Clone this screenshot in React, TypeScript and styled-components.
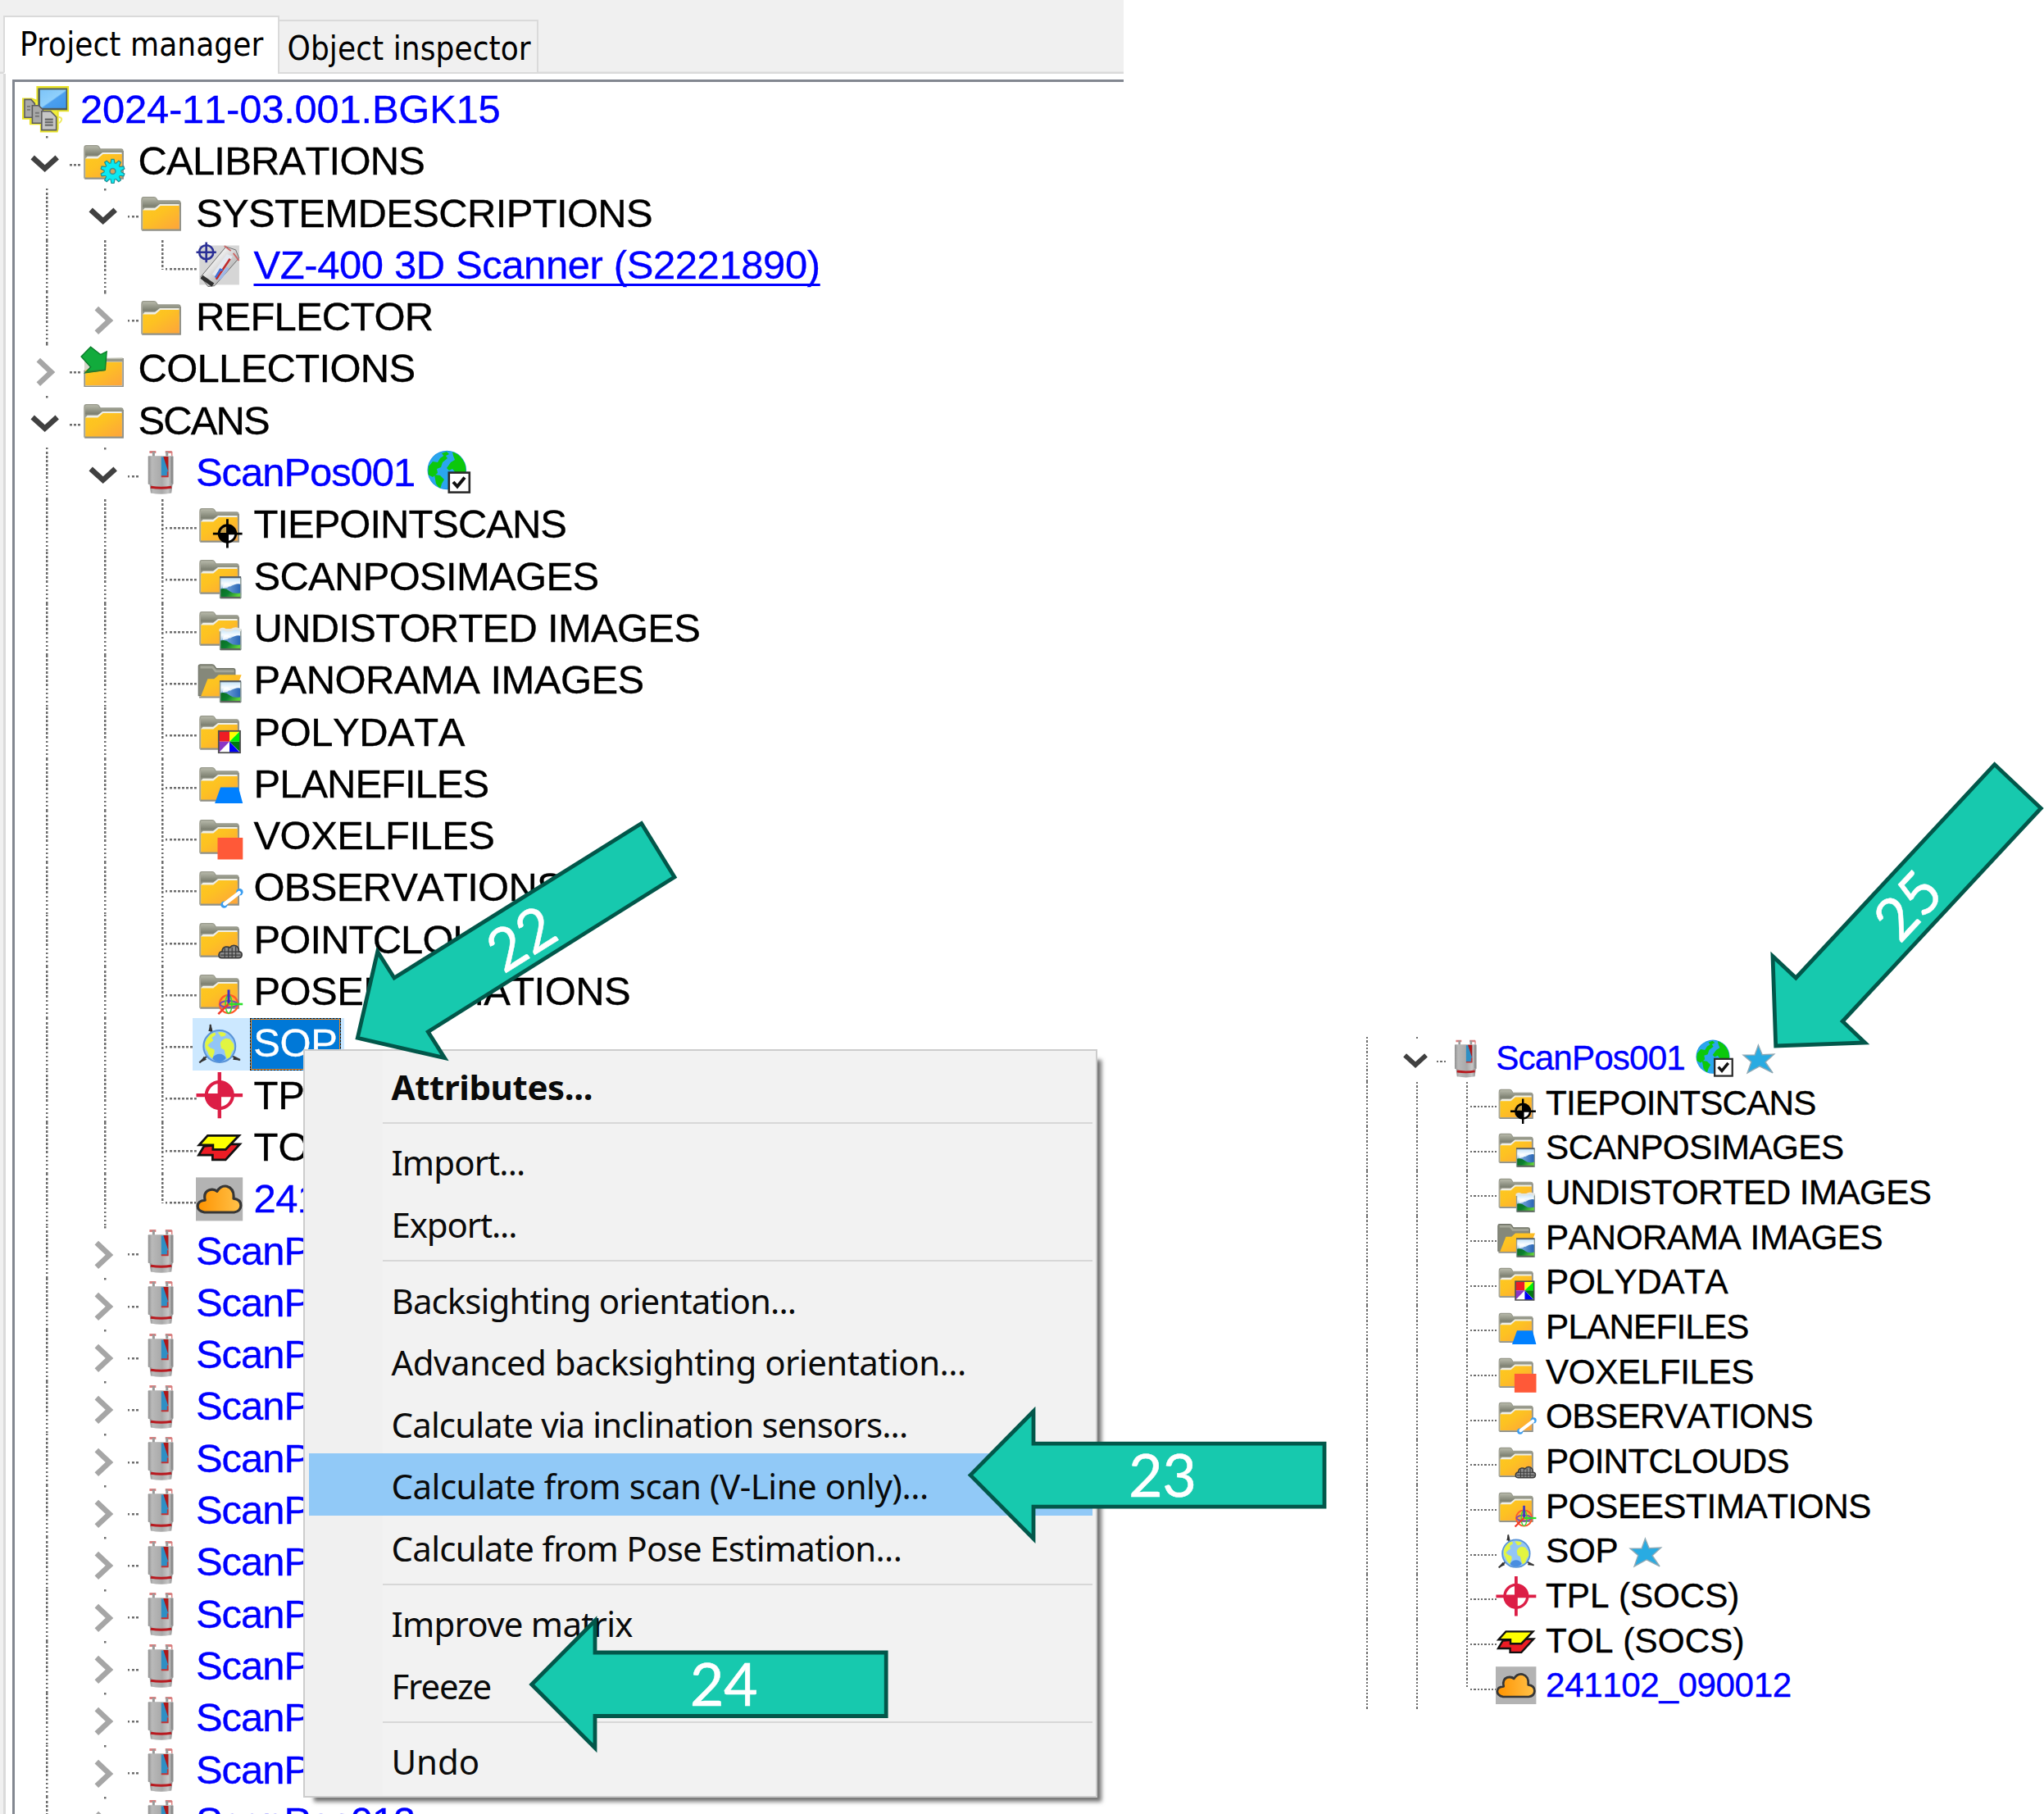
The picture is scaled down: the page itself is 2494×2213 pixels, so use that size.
import React from "react";
import styled, { createGlobalStyle, css } from "styled-components";

const GlobalStyle = createGlobalStyle`
  * { box-sizing: border-box; }
  html, body { margin: 0; padding: 0; background: #ffffff; }
`;

/* ---------- palette ---------- */
const INK = "#000000";
const LINK = "#0000ff";
const TEAL = "#17c9ae";
const TEAL_DARK = "#02574a";
const DOT = "#6e6e6e";

/* Tree measures are stated for a 48px font and turned into em. */
const em = (px: number) => `${px / 48}em`;

/* ---------- page ---------- */
const Page = styled.main`
  position: relative;
  display: flex;
  width: 2494px;
  height: 2213px;
  overflow: hidden;
  background: #ffffff;
  color: ${INK};
`;

const ManagerPane = styled.section`
  display: flex;
  flex-direction: column;
  width: 1371px;
  height: 100%;
  flex: none;
  background: #f0f0f0;
`;

const TabBar = styled.div`
  display: flex;
  align-items: flex-end;
  height: 90px;
  padding-left: 4px;
  flex: none;
  box-shadow: inset 0 -2.5px 0 #dadada;
`;

const Tab = styled.div<{ $active?: boolean }>`
  border: 2px solid #dadada;
  font-family: "DejaVu Sans Condensed", "DejaVu Sans", sans-serif;
  font-stretch: condensed;
  font-size: 40px;
  white-space: nowrap;
  color: #000;
  ${(p) =>
    p.$active
      ? css`
          width: 337px;
          height: 71px;
          padding-left: 18px;
          line-height: 66px;
          letter-spacing: 0.08px;
          background: #ffffff;
          border-bottom-color: #ffffff;
        `
      : css`
          width: 318px;
          height: 66px;
          margin-left: -2px;
          padding-left: 9.5px;
          line-height: 66px;
          letter-spacing: 0.08px;
          background: #f0f0f0;
        `}
`;

const TabBody = styled.div`
  flex: 1;
  min-height: 0;
  margin-left: 4px;
  padding: 7px 0 0 7.5px;
  border-left: 3px solid #dadada;
  background: #ffffff;
`;

const TreeFrame = styled.div`
  height: 100%;
  padding: 3px 0 0 10.5px;
  border-top: 3px solid #828790;
  border-left: 3px solid #828790;
  background: #ffffff;
  overflow: hidden;
`;

const ResultPane = styled.section`
  flex: 1;
  padding: 1265px 0 0 272px;
  overflow: hidden;
`;

/* ---------- tree ---------- */
const TreeList = styled.div<{ $size: number }>`
  font-family: "Liberation Sans", Arial, sans-serif;
  font-size: ${(p) => p.$size}px;
  font-kerning: none;
`;

const TreeRow = styled.div`
  display: flex;
  height: ${em(63.3)};
`;

type GuideKind = "line" | "tee" | "end" | "open" | "closed";

const vertical = css`
  background-image: repeating-linear-gradient(
    to bottom,
    ${DOT} 0 ${em(2.5)},
    transparent ${em(2.5)} ${em(5.064)}
  );
  background-repeat: no-repeat;
  background-position: ${em(28.2)} 0;
`;

const branch = (fullHeight: string) => css`
  background-image: repeating-linear-gradient(
      to bottom,
      ${DOT} 0 ${em(2.5)},
      transparent ${em(2.5)} ${em(5.064)}
    ),
    repeating-linear-gradient(
      to right,
      ${DOT} 0 ${em(2.5)},
      transparent ${em(2.5)} ${em(5.04)}
    );
  background-repeat: no-repeat;
  background-position: ${em(28.2)} 0, ${em(33.3)} ${em(33.8)};
  background-size: ${em(2.5)} ${fullHeight}, ${em(37.8)} ${em(2.5)};
`;

const toggle = css`
  background-image: linear-gradient(${DOT}, ${DOT}),
    repeating-linear-gradient(
      to right,
      ${DOT} 0 ${em(2.5)},
      transparent ${em(2.5)} ${em(5.04)}
    );
  background-repeat: no-repeat;
  background-position: ${em(28.2)} 0, ${em(57.2)} ${em(33.8)};
  background-size: ${em(2.5)} ${em(2.5)}, ${em(13)} ${em(2.5)};
`;

const GuideCell = styled.span<{ $kind: GuideKind }>`
  display: block;
  flex: none;
  width: ${em(70.5)};
  height: ${em(63.3)};
  ${(p) => p.$kind === "line" && css`${vertical} background-size: ${em(2.5)} 100%;`}
  ${(p) => p.$kind === "tee" && branch("100%")}
  ${(p) => p.$kind === "end" && branch(em(36.3))}
  ${(p) => (p.$kind === "open" || p.$kind === "closed") && toggle}
`;

const Chevron = styled.svg`
  display: block;
  width: ${em(70.5)};
  height: ${em(63.3)};
  fill: none;
`;

const IconCell = styled.span`
  display: block;
  flex: none;
  width: ${em(65.7)};
  padding-top: ${em(2.4)};
`;

const IconSvg = styled.svg`
  display: block;
  width: ${em(57.2)};
  height: ${em(57.2)};
  margin-left: ${em(-0.6)};
  overflow: visible;
`;

const Selection = styled.span`
  display: flex;
  margin-left: ${em(-5)};
  padding: 0 ${em(4.4)} 0 ${em(5)};
  background: #cce8ff;
`;

const Label = styled.span<{ $link?: boolean; $selected?: boolean }>`
  display: block;
  height: ${em(63.3)};
  padding: 0 ${em(4.3)};
  line-height: ${em(61)};
  white-space: pre;
  color: ${(p) => (p.$selected ? "#ffffff" : p.$link ? LINK : INK)};
  -webkit-text-stroke: 0.35px currentColor;
  ${(p) =>
    p.$selected &&
    css`
      background: #0078d7;
      border: 2.5px dotted #1a1208;
      outline: 1px solid #f08a24;
      outline-offset: -2px;
      padding: 0 2px;
      line-height: 57px;
    `}
`;

/* Tall, slightly tightened letters inside the fixed row height. */
const LabelText = styled.span<{ $underline?: boolean; $track: number }>`
  font-size: 1.02em;
  line-height: 1;
  letter-spacing: ${(p) => em(p.$track - 0.62)};
  ${(p) =>
    p.$underline &&
    css`
      text-decoration: underline;
      text-decoration-thickness: 2.6px;
      text-underline-offset: 6px;
      text-decoration-skip-ink: none;
    `}
`;

const Badge = styled.svg<{ $w: number; $h: number; $left: number; $top: number }>`
  display: block;
  flex: none;
  width: ${(p) => em(p.$w)};
  height: ${(p) => em(p.$h)};
  margin: ${(p) => em(p.$top)} 0 0 ${(p) => em(p.$left)};
  overflow: visible;
`;

/* ---------- icons ---------- */
type IconName =
  | "project" | "calib" | "folder" | "device" | "collections" | "scanner" | "tiepoint"
  | "images" | "undistorted" | "panorama" | "poly" | "plane" | "voxel" | "observ"
  | "cloudfolder" | "pose" | "sop" | "tpl" | "tol" | "cloud";

const IconDefs = () => (
  <svg width="0" height="0" aria-hidden="true" display="block">
    <defs>
      <linearGradient id="gBack" x1="0" y1="0" x2="0" y2="1">
        <stop offset="0" stopColor="#b9bbac" />
        <stop offset="0.28" stopColor="#7e8172" />
        <stop offset="0.5" stopColor="#c9cabf" />
      </linearGradient>
      <linearGradient id="gYellow" x1="0" y1="0" x2="1" y2="1">
        <stop offset="0" stopColor="#fec91e" />
        <stop offset="0.4" stopColor="#fdc222" />
        <stop offset="1" stopColor="#fda43c" />
      </linearGradient>
      <linearGradient id="gScreen" x1="0" y1="0" x2="1" y2="1">
        <stop offset="0" stopColor="#7cc3f8" />
        <stop offset="0.5" stopColor="#8fd0fb" />
        <stop offset="0.55" stopColor="#4b9fee" />
        <stop offset="1" stopColor="#3f97ea" />
      </linearGradient>
      <linearGradient id="gSky" x1="0" y1="0" x2="0" y2="1">
        <stop offset="0" stopColor="#bfe0f8" />
        <stop offset="0.3" stopColor="#f6fbff" />
        <stop offset="0.6" stopColor="#9cc8ec" />
      </linearGradient>
      <linearGradient id="gPeak" x1="0" y1="0" x2="1" y2="0">
        <stop offset="0" stopColor="#8dbbe6" />
        <stop offset="1" stopColor="#2461b4" />
      </linearGradient>
      <linearGradient id="gHill" x1="0" y1="0" x2="1" y2="0.4">
        <stop offset="0" stopColor="#0a6a20" />
        <stop offset="0.5" stopColor="#0b8030" />
        <stop offset="1" stopColor="#5fd23a" />
      </linearGradient>
      <linearGradient id="gMetal" x1="0" y1="0" x2="1" y2="0">
        <stop offset="0" stopColor="#8f8f8f" />
        <stop offset="0.15" stopColor="#b9b9b9" />
        <stop offset="0.55" stopColor="#a9a9a9" />
        <stop offset="0.8" stopColor="#c6c6c6" />
        <stop offset="1" stopColor="#8c8c8c" />
      </linearGradient>
      <linearGradient id="gTilt" x1="0" y1="0" x2="1" y2="1">
        <stop offset="0" stopColor="#8a8a8a" />
        <stop offset="0.35" stopColor="#eeeeee" />
        <stop offset="0.7" stopColor="#b5b5b5" />
        <stop offset="1" stopColor="#5d5d5d" />
      </linearGradient>
      <linearGradient id="gCloud" x1="0" y1="0" x2="1" y2="0">
        <stop offset="0" stopColor="#ff9300" />
        <stop offset="1" stopColor="#ffc24a" />
      </linearGradient>
      <clipPath id="cGlobe"><circle cx="24.3" cy="24.5" r="23.2" /></clipPath>
    </defs>
  </svg>
);

const Folder = () => (
  <g>
    <path d="M5 48V11q0-2.400 2.400-2.400H20q2 0 3 1.800l1.600 2.600H50q2.300 0 2.300 2.300V48z" fill="url(#gBack)" stroke="#96988a" strokeWidth="1.200" />
    <path d="M6.500 24.500l2.200-2.500h12.500l6-5H51v4H29l-6 5.500H7z" fill="#efefe6" />
    <path d="M6.300 47.800V24.800h15.200l6.400-5.600H51.200V47.800z" fill="url(#gYellow)" />
    <path d="M5.200 49.200h47.300V15" fill="none" stroke="#8f8f86" strokeWidth="1.600" />
    <path d="M5.200 12v37" stroke="#a8a89c" strokeWidth="1.600" />
  </g>
);

const OpenFolder = () => (
  <g>
    <path d="M3.300 47V11q0-2.200 2.200-2.200H20q2 0 3 1.800l2 3H46q2.200 0 2.200 2.200V22L12 47z" fill="#85887a" stroke="#6f7266" strokeWidth="1.200" />
    <path d="M5.500 12h15l4 5H47" fill="none" stroke="#a5a799" strokeWidth="3" />
    <path d="M6 48l8.500-21.500h8l5.500-5H56L46 48z" fill="url(#gYellow)" />
    <path d="M4 48.800h32" stroke="#8f8f86" strokeWidth="2" />
  </g>
);

const Picture = ({ torn }: { torn?: boolean }) => (
  <g>
    <rect x="29.500" y="29.200" width="26" height="26" fill="url(#gSky)" />
    <path d="M30 44q6-6 12-3 8-5 13.500-3V51H30z" fill="url(#gPeak)" />
    <path d="M34 38q5-3 9 1l-4 3-6 1z" fill="#ffffff" opacity="0.85" />
    <path d="M29.500 44q7-2 12 2.500 5 4 14 2V55.200h-26z" fill="url(#gHill)" />
    <path d="M30 54.500h25.500" stroke="#5d655d" strokeWidth="2.400" />
    <path d="M29.800 30v25M55.200 30v25" stroke="#8d9a96" strokeWidth="1.500" />
    {torn ? (
      <path d="M30 32.500v-2q3-2 6 0 4 1.500 8 0 4-2.500 8-1l3.500 2" fill="none" stroke="#e6e6e0" strokeWidth="3" />
    ) : (
      <path d="M29.200 29.400h26.300" stroke="#555d66" strokeWidth="2.200" />
    )}
  </g>
);

const gearTeeth = Array.from({ length: 10 }, (_, i) => i * 36);

const iconArt: Record<IconName, React.ReactNode> = {
  project: (
    <g>
      <path d="M18.500 1H56.500V30.500H44V52.500L43 56H23V46.500H10V40H1V15.500H12L18.500 18z" fill="#f2ee3a" stroke="#e9e32a" strokeWidth="2" />
      <rect x="19.500" y="2.500" width="36" height="27" fill="#4c5a5c" />
      <rect x="22" y="4.500" width="32" height="22.500" fill="url(#gScreen)" />
      <g stroke="#5c5c5c" strokeWidth="1.600" fill="#a9a9a9">
        <path d="M3 16.500h8l4.500 5V38.500H3z" />
        <path d="M12.500 24h8l5 5V45.500h-13z" />
        <path d="M24 31h11l7 7V54H24z" fill="#c6c6c6" />
      </g>
      <path d="M28 41h10M28 44.500h10M28 48h10" stroke="#6a6a6a" strokeWidth="2.400" />
      <path d="M16 33h5M16 37h5M6 25h4M6 29h4" stroke="#777" strokeWidth="1.800" />
      <path d="M45 38q5 1 3 4.500t-3 2" fill="none" stroke="#eeea60" strokeWidth="2" />
    </g>
  ),
  folder: <Folder />,
  calib: (
    <g>
      <Folder />
      <g fill="#0ceaf2" stroke="#1b8c90" strokeWidth="1.200">
        {gearTeeth.map((a) => (
          <path key={a} d="M37 31.500l1.200-6h3.200l1.200 6z" transform={`rotate(${a} 39.800 40.200)`} />
        ))}
      </g>
      <circle cx="39.800" cy="40.200" r="10" fill="#0ceaf2" />
      <circle cx="39.800" cy="40.200" r="3.400" fill="#d9a25a" stroke="#3a8f90" strokeWidth="1.600" />
    </g>
  ),
  device: (
    <g>
      <rect x="4.300" y="4.500" width="49" height="48.300" fill="#d6d6d6" />
      <path d="M6 43L37 6l12 4 4 10-30 34-8 1z" fill="url(#gTilt)" stroke="#6c6c6c" strokeWidth="1" />
      <path d="M20 40L38 15l7 3-16 26z" fill="#e4e8f0" />
      <path d="M25 46L42 21" stroke="#c02a2a" strokeWidth="2.600" />
      <path d="M26 47l12-16 3 2-10 13z" fill="#9db8e8" />
      <path d="M24 44l6-10 3 1" stroke="#3f6fd8" strokeWidth="2.500" fill="none" />
      <path d="M35 5l8 6M46 14l7 9" stroke="#c66" strokeWidth="1.800" />
      <path d="M7 43l14 10" stroke="#303030" strokeWidth="5" />
      <g fill="none" stroke="#2a2f96" strokeWidth="2.600">
        <circle cx="12.800" cy="12.800" r="8.600" />
        <path d="M12.800 0.500V25.500M0.500 12.800H25" />
      </g>
    </g>
  ),
  collections: (
    <g>
      <path d="M5 48V15.500L52 14V48z" fill="#d5d6ca" />
      <path d="M30 17.500H52" stroke="#96988a" strokeWidth="3.600" />
      <path d="M6.300 48.500V30l20-10.200H51.200V48.500z" fill="url(#gYellow)" />
      <path d="M5.200 30V49.600h47.300V15" fill="none" stroke="#8f8f86" strokeWidth="1.600" />
      <path d="M1.100 13L12.700 1.200 24.800 10.600 32.400 7 30.600 29.600 6 33 12.700 26z" fill="#12ab3c" stroke="#0b7d2b" strokeWidth="1.400" />
      <path d="M6 32l24-2.500" stroke="#2f7a2f" strokeWidth="1.800" />
    </g>
  ),
  scanner: (
    <g>
      <path d="M14.500 3.500h8M34 3.500h8" stroke="#d98080" strokeWidth="3" />
      <path d="M19.500 3v6M36 3v6" stroke="#9a9a9a" strokeWidth="3" />
      <path d="M42 3v5" stroke="#d98080" strokeWidth="1.500" />
      <path d="M14.500 42h28.500l-1.500 12q-12.500 2.500-25.500 0z" fill="url(#gMetal)" />
      <rect x="12.800" y="8.400" width="31" height="34.800" rx="1" fill="url(#gMetal)" />
      <path d="M41.800 9v33" stroke="#8a8a8a" strokeWidth="1.500" />
      <path d="M29 9.500h8.500v24h-8.500z" fill="#2f8fc4" />
      <path d="M31.500 9h6.200v19z" fill="#b01818" />
      <path d="M29 33.500h8v-6" fill="none" stroke="#c23434" strokeWidth="1.800" />
      <path d="M16 46.600q13 2 25.500 0" fill="none" stroke="#b81a20" strokeWidth="3.200" />
    </g>
  ),
  tiepoint: (
    <g>
      <Folder />
      <path d="M38.700 21.500V57M21 39.300H57" stroke="#000" strokeWidth="2.800" />
      <circle cx="38.700" cy="39.300" r="10.800" fill="#000" stroke="#000" strokeWidth="2" />
      <path d="M40.300 40.600h7.200a9 9 0 0 1-7.200 7.400z" fill="#fff" />
      <path d="M37.300 38.200h-7.200a9 9 0 0 1 7.200-7.400z" fill="#c9a14a" />
    </g>
  ),
  images: (<g><Folder /><Picture /></g>),
  undistorted: (<g><Folder /><Picture torn /></g>),
  panorama: (<g><OpenFolder /><Picture /></g>),
  poly: (
    <g>
      <Folder />
      <rect x="28" y="27" width="26.400" height="26.600" fill="#fff" />
      <path d="M28 27h13.300v13H28z" fill="#ee1c24" />
      <path d="M41.300 27H54L41.300 40z" fill="#ffff00" />
      <path d="M54.400 27v13H41.300z" fill="#00f000" />
      <path d="M54.400 40v13L41.300 40z" fill="#007a10" />
      <path d="M54.400 53.600H41.300V40z" fill="#0000f5" />
      <path d="M28 40h13.300L28 53.600z" fill="#8a35c8" />
      <rect x="28" y="27" width="26.400" height="26.600" fill="none" stroke="#4e4e4e" strokeWidth="1.800" />
    </g>
  ),
  plane: (<g><Folder /><path d="M30.300 32.800h22L57.600 52.400H23.300z" fill="#0080ff" /></g>),
  voxel: (<g><Folder /><rect x="26.700" y="30.200" width="31" height="26.700" fill="#ff5938" /></g>),
  observ: (
    <g>
      <Folder />
      <circle cx="34.700" cy="49" r="4.200" fill="#3a9df0" />
      <circle cx="53.800" cy="33.500" r="4.200" fill="#3a9df0" />
      <path d="M35.500 48L53 34.500" stroke="#ffffff" strokeWidth="4.600" strokeLinecap="round" />
    </g>
  ),
  cloudfolder: (
    <g>
      <Folder />
      <path d="M31.500 51q-3.500 0-3.200-4 .4-3.500 4-3.800 0-5 4.400-5.800 3.400-.4 5 1 3-4 7.200-2.400 4.600 2 3.800 7.200 4 .4 3.800 4-.3 3.800-4 3.800z" fill="#8c8c8c" stroke="#3c3c3c" strokeWidth="1.800" />
      <path d="M35.500 39v12M40 38v13M44.500 38v13M49 37v14M30 43.500h24M30 47.500h25" stroke="#3c3c3c" strokeWidth="1.200" />
    </g>
  ),
  pose: (
    <g>
      <Folder />
      <g fill="none" strokeWidth="2.200">
        <circle cx="40.300" cy="44.300" r="11.200" stroke="#ff5a2a" />
        <ellipse cx="40.300" cy="44.300" rx="10.500" ry="4" stroke="#7a4cb0" />
        <ellipse cx="40.300" cy="44.300" rx="4" ry="11" stroke="#38d838" strokeWidth="1.600" />
        <path d="M40.300 26.600V44" stroke="#3a30c8" strokeWidth="3" />
        <path d="M40 44.300H57.600" stroke="#2ae02a" strokeWidth="2.600" />
        <path d="M40 44.300L27.500 56.500" stroke="#f03a2a" strokeWidth="2.600" />
      </g>
    </g>
  ),
  sop: (
    <g>
      <path d="M17.700 5l2 14M4.300 51.700l12-10M54.300 48.500l-12-6" stroke="#4a4a4a" strokeWidth="2.400" />
      <path d="M15.500 13l2.200-9 3 9zM4 52l6-8 3 4zM55 49l-9.500-1 1.500-4z" fill="#333" />
      <circle cx="29" cy="31.700" r="19.600" fill="#93c6f6" stroke="#5a94d8" strokeWidth="2" />
      <path d="M20 46q4-5 9-5t8 5q-3 4.500-8.500 4.500T20 46z" fill="#4a8ee0" />
      <path d="M11.500 27q2-7 8-11l4-1.500 1 3-5 4 2 3-4 3-3 3 3 3 5 2q1 4-1 7l-1 4q-5-3-6-8l-2.500-4q-1-3-.5-7.500z" fill="#e2f542" />
      <path d="M27 14.500q6-1 10 1.500l-1 3-5 1zM30 28q2-5 7-6l5 1 4.500 6 .5 6-3 4-2 6-4 2-2-6-1-5-4-2z" fill="#e2f542" />
    </g>
  ),
  tpl: (
    <g>
      <circle cx="29" cy="28.300" r="16.200" fill="#fff" stroke="#dc1e46" strokeWidth="4" />
      <path d="M29 28.300V11.500A17 17 0 0 1 46 28.300zM29 28.300V45.300A17 17 0 0 1 12 28.300z" fill="#dc1e46" />
      <path d="M29 0V56.600M0.500 28.300H57.500" stroke="#dc1e46" strokeWidth="4.400" />
    </g>
  ),
  tol: (
    <g stroke="#111" strokeWidth="2.800" strokeLinejoin="miter">
      <path d="M10 27.500L3.500 38.400H20.500V44.200H36.500L54 25H40z" fill="#ed1c24" />
      <path d="M14.500 14.400H53L36.500 31.700H21V26H4z" fill="#ffff00" />
    </g>
  ),
  cloud: (
    <g>
      <rect x="0" y="1.400" width="57.600" height="53.400" fill="#b3b3b3" />
      <path d="M10.500 44.300Q2 42.500 2.200 36.500 2.500 30 11.300 29.500 9 19.500 16.500 16.800 22.500 15.300 26 18.500 30.500 11 38 12.300 47.500 15 46.300 27.300 55.300 28.500 55.300 36 55 43 47 44.300z" fill="url(#gCloud)" stroke="#363636" strokeWidth="3.200" strokeLinejoin="round" />
    </g>
  ),
};

const Icon = ({ name }: { name: IconName }) => (
  <IconSvg viewBox="0 0 57.600 57.600">{iconArt[name]}</IconSvg>
);

const GlobeBadge = () => (
  <Badge viewBox="0 0 54 53" $w={54} $h={53} $left={10.6} $top={3}>
    <circle cx="24.300" cy="24.500" r="23.800" fill="#2196e3" />
    <g clipPath="url(#cGlobe)">
      <circle cx="24.300" cy="24.500" r="23" fill="#2aa6ee" />
      <g fill="#0cc80c">
        <path d="M1 30l1-10 5-6 6 1 3-5 6-4 3 4-6 5-2 6-5 2 1 5-6 5z" />
        <path d="M31 2l8 3 8 12 1 12-6 4-6-4-5-6-4 2-3-3 5-7 5-3-2-5z" />
        <path d="M9 30l7 1 5 5-3 5-2 7-5-7z" />
        <path d="M18 4l6-2 3 3-6 3z" />
      </g>
    </g>
    <rect x="26.800" y="27.600" width="25" height="24" fill="#fff" stroke="#2a2a2a" strokeWidth="2.600" />
    <path d="M32 39l5 5.500 9-11" fill="none" stroke="#111" strokeWidth="4" />
  </Badge>
);

const StarBadge = ({ left }: { left: number }) => (
  <Badge viewBox="0 0 46 42" $w={46} $h={42} $left={left} $top={10.6}>
    <path d="M22.500 1.200L28 14.800 44.800 14 32.500 25.200 43 40.500 24.500 31 7 40.500 12.500 25 1.200 15.200 17.500 15z" fill="#29abe2" stroke="#8fa9b5" strokeWidth="1.600" />
  </Badge>
);

/* ---------- tree data ---------- */
interface Node {
  label: string;
  icon: IconName;
  guides: GuideKind[];
  link?: boolean;
  underline?: boolean;
  selected?: boolean;
  track?: number;
  globe?: boolean;
  star?: boolean;
}

const positionItems: Omit<Node, "guides">[] = [
  { label: "TIEPOINTSCANS", icon: "tiepoint", track: -0.35 },
  { label: "SCANPOSIMAGES", icon: "images", track: -0.05 },
  { label: "UNDISTORTED IMAGES", icon: "undistorted", track: -0.08 },
  { label: "PANORAMA IMAGES", icon: "panorama", track: 0.1 },
  { label: "POLYDATA", icon: "poly", track: 0.15 },
  { label: "PLANEFILES", icon: "plane", track: -0.35 },
  { label: "VOXELFILES", icon: "voxel", track: 0.1 },
  { label: "OBSERVATIONS", icon: "observ", track: -0.1 },
  { label: "POINTCLOUDS", icon: "cloudfolder", track: -0.25 },
  { label: "POSEESTIMATIONS", icon: "pose", track: 0.08 },
  { label: "SOP", icon: "sop", track: 0.3 },
  { label: "TPL (SOCS)", icon: "tpl", track: 0.5 },
  { label: "TOL (SOCS)", icon: "tol", track: 0.7 },
  { label: "241102_090012", icon: "cloud", link: true, track: 0.1 },
];

const positionRows = (selectSop: boolean): Node[] =>
  positionItems.map((item, i) => ({
    ...item,
    selected: selectSop && item.label === "SOP",
    star: !selectSop && item.label === "SOP",
    guides: ["line", "line", i === positionItems.length - 1 ? "end" : "tee"],
  }));

const projectRows: Node[] = [
  { label: "2024-11-03.001.BGK15", icon: "project", guides: [], link: true, track: 0.4 },
  { label: "CALIBRATIONS", icon: "calib", guides: ["open"], track: -0.15 },
  { label: "SYSTEMDESCRIPTIONS", icon: "folder", guides: ["line", "open"] },
  { label: "VZ-400 3D Scanner (S2221890)", icon: "device", guides: ["line", "line", "end"], link: true, underline: true, track: 0.24 },
  { label: "REFLECTOR", icon: "folder", guides: ["line", "closed"], track: -0.15 },
  { label: "COLLECTIONS", icon: "collections", guides: ["closed"], track: -0.05 },
  { label: "SCANS", icon: "folder", guides: ["open"], track: -1.2 },
  { label: "ScanPos001", icon: "scanner", guides: ["line", "open"], link: true, track: -0.4, globe: true },
  ...positionRows(true),
  ...Array.from({ length: 12 }, (_, i): Node => ({
    label: `ScanPos${String(i + 2).padStart(3, "0")}`,
    icon: "scanner",
    guides: ["line", "closed"],
    link: true,
    track: -0.4,
  })),
];

const resultRows: Node[] = [
  { label: "ScanPos001", icon: "scanner", guides: ["line", "open"], link: true, track: -0.4, globe: true, star: true },
  ...positionRows(false),
];

const Guide = ({ kind }: { kind: GuideKind }) => (
  <GuideCell $kind={kind}>
    {kind === "open" && (
      <Chevron viewBox="0 0 70.500 63.300">
        <path d="M11.700 26L26.700 39.600 41.700 26" stroke="#404040" strokeWidth="6.600" />
      </Chevron>
    )}
    {kind === "closed" && (
      <Chevron viewBox="0 0 70.500 63.300">
        <path d="M18.800 20.200L34.500 34.900 18.800 49.600" stroke="#a6a6a6" strokeWidth="6.600" />
      </Chevron>
    )}
  </GuideCell>
);

const Tree = ({ rows, size }: { rows: Node[]; size: number }) => (
  <TreeList $size={size}>
    {rows.map((row, i) => {
      const content = (
        <>
          <IconCell><Icon name={row.icon} /></IconCell>
          <Label $link={row.link} $selected={row.selected}>
            <LabelText $underline={row.underline} $track={row.track ?? 0}>{row.label}</LabelText>
          </Label>
        </>
      );
      return (
        <TreeRow key={i}>
          {row.guides.map((kind, g) => <Guide key={g} kind={kind} />)}
          {row.selected ? <Selection>{content}</Selection> : content}
          {row.globe && <GlobeBadge />}
          {row.star && <StarBadge left={row.globe ? 12.8 : 11} />}
        </TreeRow>
      );
    })}
  </TreeList>
);

/* ---------- context menu ---------- */
const Menu = styled.div`
  position: absolute;
  left: 370px;
  top: 1280px;
  width: 969px;
  height: 913px;
  padding: 4px 4.5px 4px 5px;
  border: 2.5px solid #cccccc;
  background: linear-gradient(to right, #f0f0f0 95px, #f2f2f2 95px);
  box-shadow: 9px 9px 5px -4px rgba(0, 0, 0, 0.55);
  font-family: "Noto Sans", "Open Sans", sans-serif;
  font-size: 42px;
`;

const MenuItem = styled.div<{ $hot?: boolean; $bold?: boolean; $track: number }>`
  height: 75.6px;
  padding-left: 100.5px;
  line-height: 80px;
  white-space: nowrap;
  color: #0a0a0a;
  font-weight: ${(p) => (p.$bold ? 700 : 400)};
  letter-spacing: ${(p) => p.$track}px;
  background: ${(p) => (p.$hot ? "#91c9f7" : "transparent")};
`;

const MenuRule = styled.div`
  height: 2.5px;
  margin: 7.2px 0 7.2px 90px;
  background: #d7d7d7;
`;

type MenuEntry = { text: string; track: number; hot?: boolean; bold?: boolean } | null;

const menuEntries: MenuEntry[] = [
  { text: "Attributes...", track: -0.38, bold: true },
  null,
  { text: "Import...", track: -0.9 },
  { text: "Export...", track: -1.15 },
  null,
  { text: "Backsighting orientation...", track: -0.9 },
  { text: "Advanced backsighting orientation...", track: -0.54 },
  { text: "Calculate via inclination sensors...", track: -0.86 },
  { text: "Calculate from scan (V-Line only)...", track: -0.5, hot: true },
  { text: "Calculate from Pose Estimation...", track: -0.73 },
  null,
  { text: "Improve matrix", track: -0.75 },
  { text: "Freeze", track: -1.2 },
  null,
  { text: "Undo", track: -0.1 },
];

/* ---------- step arrows ---------- */
const Annotations = styled.svg`
  position: absolute;
  left: 0;
  top: 0;
  width: 2494px;
  height: 2213px;
  pointer-events: none;
`;

const ArrowShape = styled.polygon`
  fill: ${TEAL};
  stroke: ${TEAL_DARK};
  stroke-width: 4.8;
  stroke-linejoin: miter;
`;

const ArrowNumber = styled.text`
  fill: #ffffff;
  stroke: #ffffff;
  stroke-width: 0.5;
  font-family: Lato, "Open Sans", sans-serif;
  font-size: 72px;
  letter-spacing: -0.6px;
  text-anchor: middle;
`;

interface Step { n: number; points: string; x: number; y: number; turn: number }

const steps: Step[] = [
  { n: 22, points: "436.300,1266.300 460.700,1161 481,1193 782.700,1004.500 823,1070 522.300,1258.700 542.500,1290.700", x: 635.6, y: 1144.8, turn: -32 },
  { n: 23, points: "1184,1799.600 1261,1721.700 1261,1761.200 1616,1761.200 1616,1838.200 1261,1838.200 1261,1877.200", x: 1418.2, y: 1800.3, turn: 0 },
  { n: 24, points: "648.700,2055 726,1977 726,2016 1081.200,2016 1081.200,2093.500 726,2093.500 726,2132.500", x: 883, y: 2054.6, turn: 0 },
  { n: 25, points: "2166.700,1276 2163,1166.500 2191.300,1193 2433.700,932.600 2490.300,986 2248.200,1246 2275.500,1272", x: 2327.3, y: 1104.6, turn: -47 },
];

export default function App() {
  return (
    <Page>
      <GlobalStyle />
      <ManagerPane>
        <IconDefs />
        <TabBar>
          <Tab $active>Project manager</Tab>
          <Tab>Object inspector</Tab>
        </TabBar>
        <TabBody>
          <TreeFrame>
            <Tree rows={projectRows} size={48} />
          </TreeFrame>
        </TabBody>
      </ManagerPane>
      <ResultPane>
        <Tree rows={resultRows} size={41.46} />
      </ResultPane>
      <Menu>
        {menuEntries.map((entry, i) =>
          entry ? (
            <MenuItem key={i} $hot={entry.hot} $bold={entry.bold} $track={entry.track}>
              {entry.text}
            </MenuItem>
          ) : (
            <MenuRule key={i} />
          )
        )}
      </Menu>
      <Annotations viewBox="0 0 2494 2213">
        {steps.map((s) => (
          <g key={s.n}>
            <ArrowShape points={s.points} />
            <ArrowNumber x="0" y="26" transform={`translate(${s.x} ${s.y}) rotate(${s.turn})`}>
              {s.n}
            </ArrowNumber>
          </g>
        ))}
      </Annotations>
    </Page>
  );
}
